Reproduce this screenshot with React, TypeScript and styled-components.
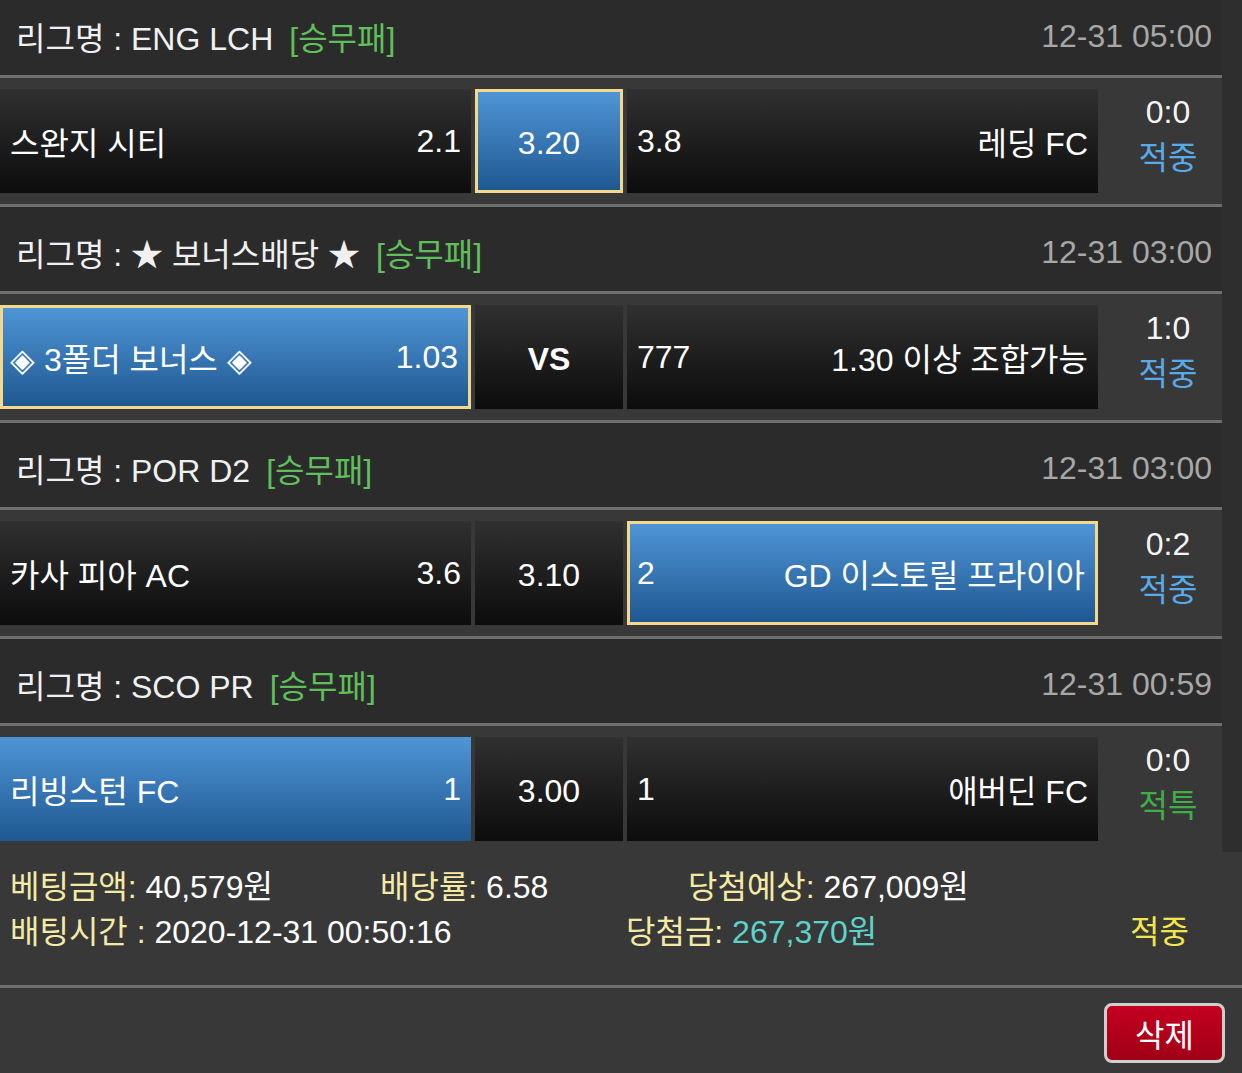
import styled, { createGlobalStyle } from 'styled-components';

const GlobalStyle = createGlobalStyle`
  html, body {
    margin: 0;
    padding: 0;
    background: #2e2e2e;
  }
  body {
    font-family: "Liberation Sans", "Noto Sans CJK KR", sans-serif;
    font-feature-settings: "palt";
    overflow: hidden;
  }
`;

type Pick = 'home' | 'draw' | 'away';

type Match = {
  league: string;
  date: string;
  home: string;
  homeOdds: string;
  draw: string;
  away: string;
  awayOdds: string;
  score: string;
  result: string;
  pick: Pick;
  outlined: boolean;
};

const matches: Match[] = [
  {
    league: 'ENG LCH',
    date: '12-31 05:00',
    home: '스완지 시티',
    homeOdds: '2.1',
    draw: '3.20',
    away: '레딩 FC',
    awayOdds: '3.8',
    score: '0:0',
    result: '적중',
    pick: 'draw',
    outlined: true,
  },
  {
    league: '★ 보너스배당 ★',
    date: '12-31 03:00',
    home: '◈ 3폴더 보너스 ◈',
    homeOdds: '1.03',
    draw: 'VS',
    away: '1.30 이상 조합가능',
    awayOdds: '777',
    score: '1:0',
    result: '적중',
    pick: 'home',
    outlined: true,
  },
  {
    league: 'POR D2',
    date: '12-31 03:00',
    home: '카사 피아 AC',
    homeOdds: '3.6',
    draw: '3.10',
    away: 'GD 이스토릴 프라이아',
    awayOdds: '2',
    score: '0:2',
    result: '적중',
    pick: 'away',
    outlined: true,
  },
  {
    league: 'SCO PR',
    date: '12-31 00:59',
    home: '리빙스턴 FC',
    homeOdds: '1',
    draw: '3.00',
    away: '애버딘 FC',
    awayOdds: '1',
    score: '0:0',
    result: '적특',
    pick: 'home',
    outlined: false,
  },
];

const App = () => {
  return (
    <>
      <GlobalStyle />
      <Page>
        <List>
          {matches.map((m, key) => (
            <div key={key}>
              <LeagueBar>
                <LeagueName>
                  리그명 : {m.league}
                  <GameType>[승무패]</GameType>
                </LeagueName>
                <DateText>{m.date}</DateText>
              </LeagueBar>
              <MatchRow>
                <Cell
                  $width={471}
                  $active={m.pick === 'home'}
                  $outlined={m.pick === 'home' && m.outlined}
                >
                  <span>{m.home}</span>
                  <span>{m.homeOdds}</span>
                </Cell>
                <DrawCell
                  $width={148}
                  $active={m.pick === 'draw'}
                  $outlined={m.pick === 'draw' && m.outlined}
                  $bold={m.draw === 'VS'}
                >
                  {m.draw}
                </DrawCell>
                <Cell
                  $width={471}
                  $active={m.pick === 'away'}
                  $outlined={m.pick === 'away' && m.outlined}
                >
                  <span>{m.awayOdds}</span>
                  <span>{m.away}</span>
                </Cell>
                <ScoreBox>
                  <Score>{m.score}</Score>
                  <Result $special={m.result === '적특'}>{m.result}</Result>
                </ScoreBox>
              </MatchRow>
            </div>
          ))}
        </List>
        <Summary>
          <SummaryLine $cols="370px 308px 1fr">
            <span>
              <Label>베팅금액:</Label> 40,579원
            </span>
            <span>
              <Label>배당률:</Label> 6.58
            </span>
            <span>
              <Label>당첨예상:</Label> 267,009원
            </span>
          </SummaryLine>
          <SummaryLine $cols="616px 504px 1fr">
            <span>
              <Label>배팅시간 :</Label> 2020-12-31 00:50:16
            </span>
            <span>
              <Label>당첨금:</Label> <Prize>267,370원</Prize>
            </span>
            <Status>적중</Status>
          </SummaryLine>
        </Summary>
        <Footer>
          <DeleteButton>삭제</DeleteButton>
        </Footer>
      </Page>
    </>
  );
};

export default App;

const Page = styled.div`
  width: 1242px;
  height: 1073px;
  overflow: hidden;
  color: #f2f2f2;
  font-size: 32px;
`;

const List = styled.div`
  width: 1222px;
  margin-top: -12px;
`;

const LeagueBar = styled.div`
  display: flex;
  align-items: center;
  justify-content: space-between;
  height: 78px;
  padding: 6px 10px 0 16px;
  background: #2b2b2b;
  border-top: 3px solid #6f6f6f;
  border-bottom: 3px solid #6f6f6f;
`;

const LeagueName = styled.div`
  color: #f0f0f0;
`;

const GameType = styled.span`
  margin-left: 16px;
  color: #5fbf5a;
`;

const DateText = styled.div`
  color: #a8a8a8;
`;

const MatchRow = styled.div`
  display: flex;
  gap: 4px;
  padding: 11px 0;
  background: #383838;
`;

const Cell = styled.div<{ $width: number; $active: boolean; $outlined: boolean }>`
  flex: 0 0 ${(p) => p.$width}px;
  height: 104px;
  box-sizing: border-box;
  display: flex;
  align-items: center;
  justify-content: space-between;
  color: #ffffff;
  background: ${(p) =>
    p.$active
      ? 'linear-gradient(to bottom, #4f95d6, #1f5891)'
      : 'linear-gradient(to bottom, #303030, #0c0c0c)'};
  border: ${(p) => (p.$outlined ? '3px solid #f2d98c' : 'none')};
  padding: ${(p) => (p.$outlined ? '0 10px 0 7px' : '0 10px')};
`;

const DrawCell = styled(Cell)<{ $bold: boolean }>`
  justify-content: center;
  padding: 4px 0 0;
  font-weight: ${(p) => (p.$bold ? 700 : 400)};
`;

const ScoreBox = styled.div`
  flex: 1;
  display: flex;
  flex-direction: column;
  align-items: center;
  justify-content: center;
  padding: 0 0 12px 12px;
  line-height: 46px;
`;

const Score = styled.div`
  color: #f4f4f4;
`;

const Result = styled.div<{ $special: boolean }>`
  color: ${(p) => (p.$special ? '#3fae47' : '#5aa9e8')};
`;

const Summary = styled.div`
  background: #383838;
  padding: 13px 0 30px 10px;
  border-bottom: 3px solid #6f6f6f;
  line-height: 45px;
`;

const SummaryLine = styled.div<{ $cols: string }>`
  display: grid;
  grid-template-columns: ${(p) => p.$cols};
  color: #ffffff;
  white-space: nowrap;
`;

const Label = styled.span`
  color: #f4eaa6;
`;

const Prize = styled.span`
  color: #5cd3cb;
`;

const Status = styled.span`
  color: #f2e64c;
`;

const Footer = styled.div`
  display: flex;
  justify-content: flex-end;
  padding: 15px 17px 0 0;
  height: 100px;
  background: #383838;
`;

const DeleteButton = styled.button`
  width: 121px;
  height: 60px;
  border: 3px solid #cfcfcf;
  border-radius: 8px;
  background: linear-gradient(to bottom, #c4001e, #a10018);
  color: #ffffff;
  font-family: "Liberation Sans", "Noto Sans CJK KR", sans-serif;
  font-size: 32px;
  padding: 0;
  cursor: pointer;
`;
